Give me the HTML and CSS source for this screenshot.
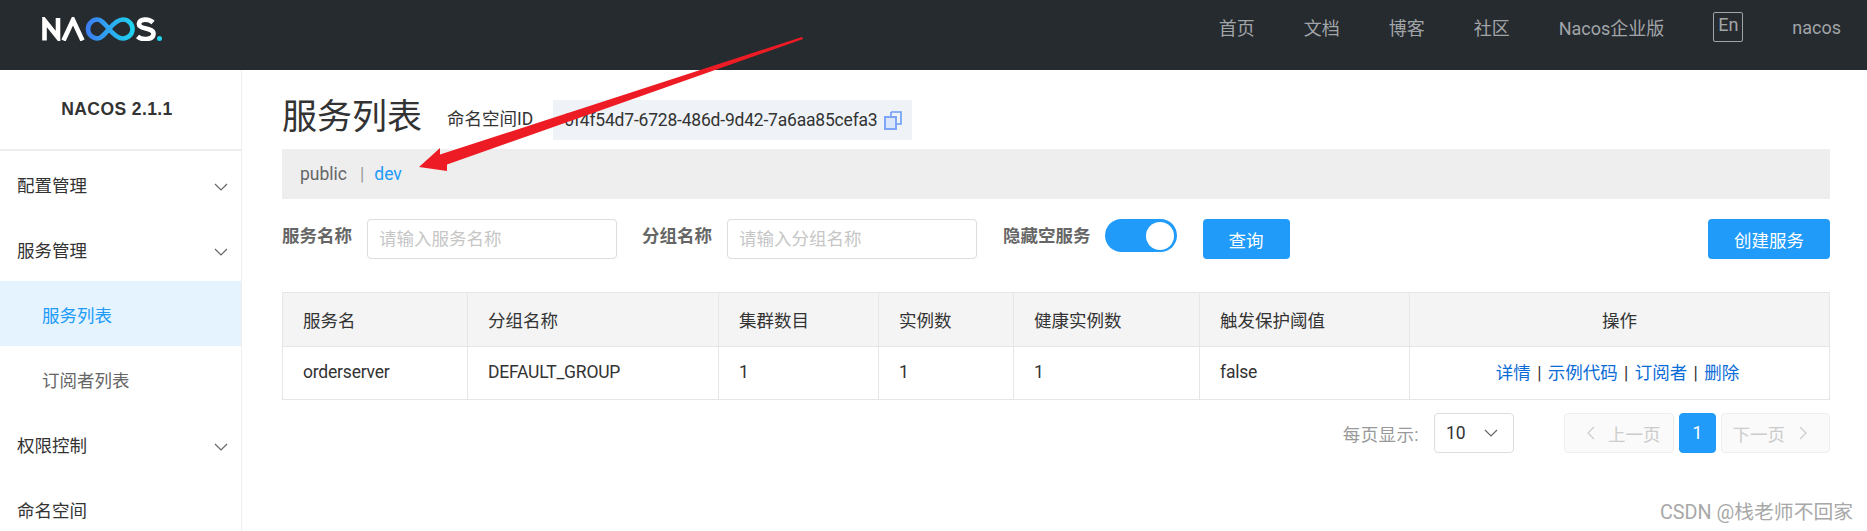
FILE: index.html
```html
<!DOCTYPE html>
<html lang="zh">
<head>
<meta charset="utf-8">
<title>Nacos</title>
<link rel="stylesheet" href="styles.css">
</head>
<body>
<header class="topbar">
  <svg class="logo" viewBox="0 0 120 24" width="120" height="24" aria-label="NACOS">
    <defs><linearGradient id="inf" x1="0" x2="1" y1="0" y2="0"><stop offset="0" stop-color="#3b7ff2"/><stop offset="1" stop-color="#1fd2ee"/></linearGradient></defs>
    <path class="lw" d="M2.5 23.5V3.5L16 20.5V1"/>
    <path class="lw" d="M21.5 23.5L31 3L40.5 23.5"/>
    <path class="li" d="M67 12C62 6 59 2.500 55.500 2.500A9.500 9.500 0 0 0 55.500 21.500C59 21.500 62 18 67 12C72 6 76 2.500 81 2.500A9.500 9.500 0 0 1 81 21.500C76 21.500 72 18 67 12"/>
    <path class="lw" d="M111 5.5C107 1.500 98 1.500 97 6.500C96 13 112 10 111.500 17C111 23 100 23.500 95.500 19.500"/>
    <circle class="ld" cx="117.500" cy="21.500" r="2.500"/>
  </svg>
  <nav class="nav">
    <a>首页</a><a>文档</a><a>博客</a><a>社区</a><a>Nacos企业版</a><span class="lang">En</span><a>nacos</a>
  </nav>
</header>
<div class="shell">
  <aside class="side">
    <div class="brand">NACOS 2.1.1</div>
    <ul class="menu">
      <li class="item">配置管理<svg class="chev" viewBox="0 0 14 8"><path d="M1 1l6 6 6-6"/></svg></li>
      <li class="item">服务管理<svg class="chev" viewBox="0 0 14 8"><path d="M1 1l6 6 6-6"/></svg></li>
      <li class="item sub active">服务列表</li>
      <li class="item sub">订阅者列表</li>
      <li class="item">权限控制<svg class="chev" viewBox="0 0 14 8"><path d="M1 1l6 6 6-6"/></svg></li>
      <li class="item">命名空间</li>
    </ul>
  </aside>
  <main class="main">
    <div class="titlerow">
      <h1 class="title">服务列表</h1>
      <span class="nslabel">命名空间ID</span>
      <div class="nsbox">
        <span class="nsid">0f4f54d7-6728-486d-9d42-7a6aa85cefa3</span>
        <svg class="copy" viewBox="0 0 18 19" width="18" height="19"><path class="c1" d="M7 1h10v12h-4"/><path class="c1" d="M7 1v4"/><rect class="c2" x="1" y="6" width="11" height="12"/></svg>
      </div>
    </div>
    <div class="nsbar"><span class="ns">public</span><span class="sep">|</span><span class="ns on">dev</span></div>
    <form class="filters">
      <label class="flabel">服务名称</label>
      <div class="input">请输入服务名称</div>
      <label class="flabel l2">分组名称</label>
      <div class="input">请输入分组名称</div>
      <label class="flabel l3">隐藏空服务</label>
      <div class="switch"><span class="knob"></span></div>
      <button type="button" class="btn query">查询</button>
      <button type="button" class="btn create">创建服务</button>
    </form>
    <table class="grid">
      <colgroup><col class="c-a"><col class="c-b"><col class="c-c"><col class="c-d"><col class="c-e"><col class="c-f"><col class="c-g"></colgroup>
      <thead><tr><th>服务名</th><th>分组名称</th><th>集群数目</th><th>实例数</th><th>健康实例数</th><th>触发保护阈值</th><th class="mid">操作</th></tr></thead>
      <tbody><tr><td>orderserver</td><td>DEFAULT_GROUP</td><td>1</td><td>1</td><td>1</td><td>false</td><td class="mid ops"><a class="link">详情</a> | <a class="link">示例代码</a> | <a class="link">订阅者</a> | <a class="link">删除</a></td></tr></tbody>
    </table>
    <div class="pager">
      <span class="perpage">每页显示:</span>
      <div class="select"><span>10</span><svg class="chev sel" viewBox="0 0 14 8"><path d="M1 1l6 6 6-6"/></svg></div>
      <div class="page prev"><svg class="arrow" viewBox="0 0 8 14"><path d="M7 1L1 7l6 6"/></svg>上一页</div>
      <div class="page cur">1</div>
      <div class="page next">下一页<svg class="arrow" viewBox="0 0 8 14"><path d="M1 1l6 6-6 6"/></svg></div>
    </div>
  </main>
</div>
<svg class="redarrow" viewBox="0 0 1867 531" width="1867" height="531"><polygon points="802,37 803,39 447,164.500 447,171 419,167 440,148 440,154.500"/></svg>
<div class="mark">CSDN @栈老师不回家</div>
</body>
</html>
```
FILE: styles.css
```css
* { box-sizing: border-box; }
html, body { margin: 0; height: 100%; overflow: hidden; background: #fff; }
body {
  position: relative;
  font-family: Roboto, "Noto Sans CJK SC", sans-serif;
  font-size: 17.5px;
  color: #333;
}
a { color: inherit; text-decoration: none; }

.topbar {
  height: 70px;
  background: #262b30;
  display: flex;
  align-items: center;
  justify-content: space-between;
  padding: 0 26px 16px 42px;
}
.logo { display: block; margin-top: 4px; }
.lw, .li { fill: none; stroke-width: 4.6; }
.lw { stroke: #fff; }
.li { stroke: url(#inf); }
.ld { fill: #1fd2ee; }
.nav { display: flex; align-items: center; gap: 49px; color: #a2a5a8; font-size: 18px; }
.lang {
  width: 30px;
  height: 30px;
  border: 1px solid #a2a5a8;
  border-radius: 2px;
  display: flex;
  justify-content: center;
  padding-top: 1px;
  line-height: 22px;
}

.shell { display: flex; height: calc(100vh - 70px); }
.side { width: 242px; flex: none; border-right: 1px solid #eee; }
.brand {
  height: 81px;
  padding: 0 7px 1px 0;
  border-bottom: 2px solid #eee;
  display: flex;
  align-items: center;
  justify-content: center;
  font-weight: 700;
  font-family: "Liberation Sans", "Noto Sans CJK SC", sans-serif;
  font-size: 17.5px;
  letter-spacing: 0.4px;
}
.menu { list-style: none; margin: 0; padding: 0; }
.item {
  height: 65px;
  padding: 2px 13px 0 17px;
  display: flex;
  align-items: center;
  justify-content: space-between;
}
.sub { padding-left: 42px; color: #666; }
.active { background: #e4f3fe; color: #209bfa; }
.chev { width: 14px; height: 8px; display: block; margin-top: 4px; }
.chev path { fill: none; stroke: #666; stroke-width: 1.2; }

.main { flex: 1; min-width: 0; padding: 30px 37px 0 40px; }
.titlerow { display: flex; align-items: flex-start; height: 40px; margin-bottom: 9px; }
.title { margin: 0 25px 0 0; font-size: 35px; line-height: 35px; font-weight: 400; }
.nslabel { line-height: 38px; margin-right: 20px; }
.nsbox {
  width: 359px;
  height: 40px;
  background: #eff3f8;
  display: flex;
  align-items: center;
  padding-left: 11px;
  gap: 6px;
  color: #333;
}
.nsid { letter-spacing: -0.2px; }
.copy { flex: none; }
.c1 { fill: none; stroke: #6c9cf6; stroke-width: 1.6; }
.c2 { fill: #dbe6fb; stroke: #7ea6f8; stroke-width: 2; }

.nsbar {
  height: 50px;
  background: #eee;
  display: flex;
  align-items: center;
  padding-left: 18px;
}
.ns { color: #666; }
.ns.on { color: #209bfa; }
.sep { margin: 0 10px 0 13px; color: #999; }

.filters { display: flex; margin-top: 20px; height: 40px; align-items: flex-start; }
.flabel { font-weight: 700; color: #666; line-height: 35px; margin-right: 15px; }
.l2 { margin-left: 25px; }
.l3 { margin-left: 26px; margin-right: 14px; }
.input {
  width: 250px;
  height: 40px;
  border: 1px solid #ddd;
  border-radius: 4px;
  color: #c6c6c6;
  padding-left: 11px;
  line-height: 38px;
}
.switch {
  width: 72px;
  height: 33px;
  border-radius: 17px;
  background: #209bfa;
  position: relative;
}
.knob {
  position: absolute;
  right: 2.500px;
  top: 2.500px;
  width: 28px;
  height: 28px;
  border-radius: 50%;
  background: #fff;
}
.btn {
  height: 40px;
  border: 0;
  border-radius: 4px;
  background: #209bfa;
  color: #fff;
  font: inherit;
  padding: 0;
}
.query { width: 87px; margin-left: 26px; }
.create { width: 122px; margin-left: auto; }

.grid {
  width: 1547px;
  margin-top: 33px;
  border-collapse: collapse;
  table-layout: fixed;
  border: 1px solid #e6e6e6;
}
.c-a { width: 185px; }
.c-b { width: 251px; }
.c-c { width: 160px; }
.c-d { width: 135px; }
.c-e { width: 186px; }
.c-f { width: 210px; }
.c-g { width: 420px; }
th, td {
  border: 1px solid #e6e6e6;
  padding: 0 20px;
  text-align: left;
  font-weight: 400;
}
th { height: 54px; background: #f4f4f4; }
td { height: 53px; padding-bottom: 2px; letter-spacing: -0.2px; }
.mid { text-align: center; }
.ops { padding-right: 24px; padding-bottom: 4px; letter-spacing: 0; word-spacing: 2px; }
.link { color: #0a6cd6; }

.pager { display: flex; align-items: center; justify-content: flex-end; margin-top: 13px; height: 40px; }
.perpage { color: #999; margin-right: 15px; letter-spacing: 0.4px; }
.select {
  width: 80px;
  height: 40px;
  border: 1px solid #ddd;
  border-radius: 4px;
  display: flex;
  align-items: center;
  justify-content: space-between;
  padding: 0 15px 0 11px;
  margin-right: 50px;
}
.sel { width: 14px; margin-top: 0; }
.page {
  height: 40px;
  border: 1px solid #eee;
  border-radius: 4px;
  background: #fafafa;
  color: #ccc;
  display: flex;
  align-items: center;
}
.prev { width: 110px; gap: 13px; margin-right: 5px; padding-left: 22px; }
.next { width: 109px; gap: 14px; margin-left: 5px; padding-right: 22px; justify-content: flex-end; }
.cur { width: 37px; background: #209bfa; border-color: #209bfa; color: #fff; justify-content: center; }
.arrow { width: 8px; height: 14px; display: block; }
.arrow path { fill: none; stroke: #ccc; stroke-width: 1.2; }

.redarrow { position: absolute; left: 0; top: 0; pointer-events: none; }
.redarrow polygon { fill: #ed1c24; }
.mark {
  position: absolute;
  right: 14px;
  top: 500px;
  font-size: 19.8px;
  line-height: 26px;
  color: #a8a8a8;
}
```
